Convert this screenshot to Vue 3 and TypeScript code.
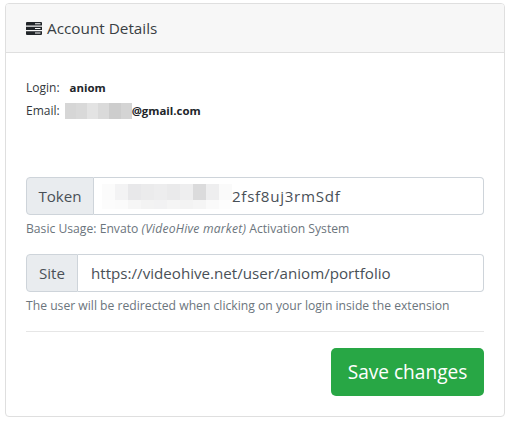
<script setup lang="ts">
const emailCells: string[] = ['#d6d6d6', '#d9d9d9', '#e3e3e3', '#dadada', '#cdcdcd', '#d4d4d4']
const tokenTop: string[] = ['#fbfbfb', '#f3f3f4', '#e8e8ea', '#ebebec', '#ededee', '#eaeaeb', '#eeeeef', '#dbdbdc', '#eeeeef', '#fafafa']
const tokenBottom: string[] = ['#fcfcfc', '#fbfbfb', '#f6f6f6', '#f3f3f3', '#f2f2f3', '#f5f5f5', '#f3f3f3', '#f5f5f5', '#fafafa', '#fdfdfd']
</script>

<template>
  <div class="page">
    <section class="card">
      <header class="card-head">
        <svg class="head-icon" viewBox="0 0 16 13" width="16" height="13" aria-hidden="true">
          <path fill="#212529" d="M0 1a1 1 0 0 1 1-1h14a1 1 0 0 1 1 1v2.6H0zM0 4.7h16v3.4H0zM0 9.2h16V12a1 1 0 0 1-1 1H1a1 1 0 0 1-1-1z" />
          <path fill="#f7f7f7" d="M9 1.3h5.5v1H9zM9 5.9h5.5v1H9zM9 10.5h5.5v1H9z" />
        </svg>
        <span>Account Details</span>
      </header>
      <div class="card-body">
        <div class="info">
          <div class="info-row"><span>Login:</span><strong class="login">aniom</strong></div>
          <div class="info-row">
            <span>Email:</span>
            <span class="mosaic-email">
              <i v-for="(c, i) in emailCells" :key="i" :style="{ background: c }"></i>
            </span>
            <strong>@gmail.com</strong>
          </div>
        </div>

        <div class="group token">
          <span class="addon">Token</span>
          <div class="field">
            <span class="mosaic-token">
              <span class="mosaic-line tall"><i v-for="(c, i) in tokenTop" :key="i" :style="{ background: c }"></i></span>
              <span class="mosaic-line"><i v-for="(c, i) in tokenBottom" :key="i" :style="{ background: c }"></i></span>
            </span>
            <span class="token-tail">2fsf8uj3rmSdf</span>
          </div>
        </div>
        <p class="hint">Basic Usage: Envato <em>(VideoHive market)</em> Activation System</p>

        <div class="group site">
          <span class="addon">Site</span>
          <div class="field">https://videohive.net/user/aniom/portfolio</div>
        </div>
        <p class="hint">The user will be redirected when clicking on your login inside the extension</p>

        <hr class="rule" />
        <div class="actions">
          <button class="save" type="button">Save changes</button>
        </div>
      </div>
    </section>
  </div>
</template>

<style scoped>
.page {
  width: 524px;
  height: 428px;
  padding: 3px 19px 0 5px;
  box-sizing: border-box;
  font-family: "Open Sans", "Noto Sans", "Liberation Sans", sans-serif;
  background: #fff;
  color: #212529;
  overflow: hidden;
}
.card {
  height: 414px;
  box-sizing: border-box;
  border: 1px solid #dfdfdf;
  border-radius: 4px;
  overflow: hidden;
}
.card-head {
  height: 49px;
  box-sizing: border-box;
  display: flex;
  align-items: center;
  gap: 5px;
  padding: 0 20px;
  background: #f7f7f7;
  border-bottom: 1px solid #dfdfdf;
  font-size: 15.3px;
  color: #3a3f44;
}
.head-icon {
  flex: none;
}
.card-body {
  padding: 0 20px;
}
.info {
  padding-top: 23px;
  height: 124px;
  box-sizing: border-box;
  font-size: 12px;
  color: #33383d;
}
.info-row {
  display: flex;
  align-items: center;
  height: 23px;
}
.info-row strong {
  font-size: 11.4px;
  color: #212529;
}
.login {
  margin-left: 10px;
}
.mosaic-email {
  display: flex;
  width: 67px;
  height: 16px;
  margin-left: 5px;
}
.mosaic-email i {
  flex: 1;
}
.group {
  display: flex;
  height: 38px;
  box-sizing: border-box;
  font-size: 15.15px;
  color: #495057;
}
.addon {
  display: flex;
  align-items: center;
  justify-content: center;
  box-sizing: border-box;
  background: #e9ecef;
  border: 1px solid #ced4da;
  border-radius: 4px 0 0 4px;
}
.token .addon {
  width: 68px;
}
.site .addon {
  width: 52px;
}
.field {
  flex: 1;
  display: flex;
  align-items: center;
  padding-left: 8px;
  border: 1px solid #ced4da;
  border-left: 0;
  border-radius: 0 4px 4px 0;
  background: #fff;
  white-space: nowrap;
}
.site .field {
  padding-left: 13px;
}
.token-tail {
  letter-spacing: 0.7px;
}
.mosaic-token {
  display: flex;
  flex-direction: column;
  width: 130px;
  height: 25px;
}
.mosaic-line {
  display: flex;
  flex: 1;
}
.mosaic-line.tall {
  flex: 2;
}
.mosaic-line i {
  flex: 1;
}
.hint {
  margin: 0;
  height: 39px;
  padding-top: 5px;
  box-sizing: border-box;
  font-size: 12.17px;
  color: #6c757d;
}
.hint em {
  letter-spacing: 0.2px;
}
.rule {
  margin: 0;
  border: 0;
  border-top: 1px solid #e6e6e6;
}
.actions {
  display: flex;
  justify-content: flex-end;
  margin-top: 16px;
}
.save {
  width: 153px;
  height: 48px;
  border: 0;
  border-radius: 5px;
  background: #28a745;
  color: #fff;
  font-family: inherit;
  font-size: 19.1px;
  padding: 0;
}
</style>
